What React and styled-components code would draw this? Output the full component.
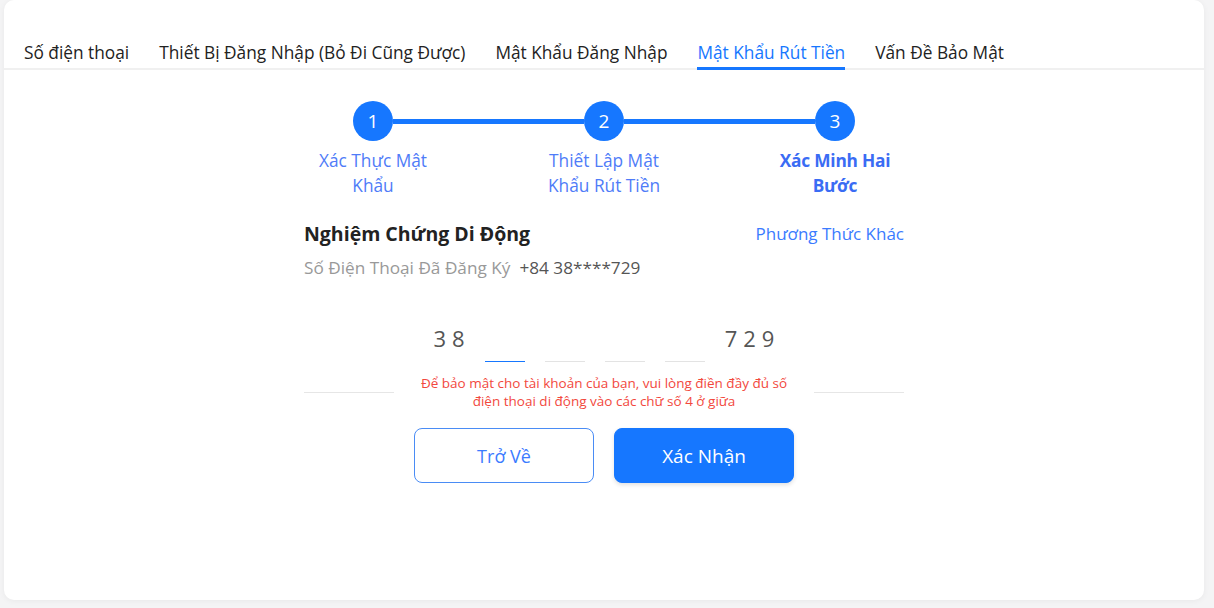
import React from 'react';
import styled, { createGlobalStyle } from 'styled-components';

const GlobalStyle = createGlobalStyle`
  body {
    margin: 0;
    background-color: #f4f4f5;
    font-family: 'Open Sans', 'Noto Sans', sans-serif;
    color: #222;
  }
`;

const Page = styled.div`
  padding: 0 10px 8px 4px;
`;

const Card = styled.div`
  height: 600px;
  background-color: #fff;
  border-radius: 10px;
  box-shadow: 0 1px 6px rgba(0, 0, 0, 0.05);
  display: flex;
  flex-direction: column;
`;

const TabBar = styled.div`
  display: flex;
  gap: 30px;
  padding: 41px 20px 0 20px;
  border-bottom: 2px solid #f0f0f0;
`;

const Tab = styled.div`
  font-size: 17.3px;
  line-height: 24px;
  padding: 0 0 2px 0;
  margin-bottom: -2px;
  color: ${({ active }) => (active ? '#1677ff' : '#222')};
  border-bottom: 3px solid ${({ active }) => (active ? '#1677ff' : 'transparent')};
  white-space: nowrap;
`;

const Steps = styled.div`
  display: flex;
  flex-direction: column;
  align-items: center;
  margin-top: 31px;
`;

const StepTrack = styled.div`
  display: flex;
  align-items: center;
`;

const StepCircle = styled.div`
  width: 40px;
  height: 40px;
  border-radius: 50%;
  background-color: #1677ff;
  color: #fff;
  font-size: 19px;
  display: flex;
  align-items: center;
  justify-content: center;
`;

const Connector = styled.div`
  width: 191px;
  height: 5px;
  background-color: #1677ff;
`;

const StepLabels = styled.div`
  display: grid;
  grid-template-columns: repeat(3, 231px);
  margin-top: 7px;
`;

const StepLabel = styled.div`
  justify-self: center;
  max-width: 125px;
  text-align: center;
  font-size: 17.3px;
  line-height: 25px;
  color: ${({ current }) => (current ? '#3a6cf4' : '#4f7cf8')};
  font-weight: ${({ current }) => (current ? 700 : 400)};
  letter-spacing: ${({ current }) => (current ? '-0.2px' : '0')};
`;

const Section = styled.div`
  width: 600px;
  margin: 23px auto 0 auto;
  display: flex;
  flex-direction: column;
`;

const TitleRow = styled.div`
  display: flex;
  justify-content: space-between;
  align-items: center;
`;

const Title = styled.div`
  font-size: 19.5px;
  font-weight: 700;
  line-height: 26px;
  color: #222;
`;

const LinkText = styled.div`
  font-size: 17px;
  line-height: 26px;
  color: #3b7bff;
`;

const PhoneInfo = styled.div`
  margin-top: 9px;
  font-size: 17.2px;
  line-height: 24px;
  color: #999;

  span {
    color: #555;
    margin-left: 9px;
  }
`;

const DigitRow = styled.div`
  display: flex;
  align-items: flex-end;
  justify-content: center;
  gap: 20px;
  margin-top: 43px;
`;

const Digits = styled.div`
  font-size: 22px;
  line-height: 30px;
  letter-spacing: 6px;
  margin-right: -6px;
  color: #555;
  margin-bottom: 10px;
`;

const Slot = styled.div`
  width: 40px;
  height: 1px;
  margin-bottom: 1px;
  background-color: ${({ focused }) => (focused ? '#1677ff' : '#e3e3e3')};
`;

const HintRow = styled.div`
  display: flex;
  align-items: center;
  margin-top: 11px;
`;

const HintLine = styled.div`
  flex: 1;
  height: 1px;
  background-color: #e6e6e6;
`;

const HintText = styled.div`
  width: 420px;
  padding: 0 14px;
  box-sizing: border-box;
  text-align: center;
  font-size: 13.5px;
  line-height: 18px;
  color: #f2483d;
`;

const ButtonRow = styled.div`
  display: flex;
  justify-content: center;
  gap: 20px;
  margin-top: 18px;
`;

const Button = styled.button`
  width: 180px;
  height: 55px;
  border-radius: 8px;
  font-family: inherit;
  font-size: ${({ primary }) => (primary ? '19px' : '18px')};
  border: 1px solid ${({ primary }) => (primary ? '#1677ff' : '#4a8cf5')};
  background-color: ${({ primary }) => (primary ? '#1677ff' : '#fff')};
  color: ${({ primary }) => (primary ? '#fff' : '#3b7bff')};
  box-shadow: ${({ primary }) => (primary ? '0 2px 4px rgba(0, 0, 0, 0.12)' : 'none')};
`;

const tabs = [
  'Số điện thoại',
  'Thiết Bị Đăng Nhập (Bỏ Đi Cũng Được)',
  'Mật Khẩu Đăng Nhập',
  'Mật Khẩu Rút Tiền',
  'Vấn Đề Bảo Mật',
];

const steps = ['Xác Thực Mật Khẩu', 'Thiết Lập Mật Khẩu Rút Tiền', 'Xác Minh Hai Bước'];

const App = () => {
  return (
    <Page>
      <GlobalStyle />
      <Card>
        <TabBar>
          {tabs.map((t, i) => (
            <Tab key={t} active={i === 3}>
              {t}
            </Tab>
          ))}
        </TabBar>

        <Steps>
          <StepTrack>
            <StepCircle>1</StepCircle>
            <Connector />
            <StepCircle>2</StepCircle>
            <Connector />
            <StepCircle>3</StepCircle>
          </StepTrack>
          <StepLabels>
            {steps.map((s, i) => (
              <StepLabel key={s} current={i === 2}>
                {s}
              </StepLabel>
            ))}
          </StepLabels>
        </Steps>

        <Section>
          <TitleRow>
            <Title>Nghiệm Chứng Di Động</Title>
            <LinkText>Phương Thức Khác</LinkText>
          </TitleRow>
          <PhoneInfo>
            Số Điện Thoại Đã Đăng Ký<span>+84 38****729</span>
          </PhoneInfo>

          <DigitRow>
            <Digits>38</Digits>
            <Slot focused />
            <Slot />
            <Slot />
            <Slot />
            <Digits>729</Digits>
          </DigitRow>

          <HintRow>
            <HintLine />
            <HintText>
              Để bảo mật cho tài khoản của bạn, vui lòng điền đầy đủ số điện thoại di động vào các
              chữ số 4 ở giữa
            </HintText>
            <HintLine />
          </HintRow>

          <ButtonRow>
            <Button>Trở Về</Button>
            <Button primary>Xác Nhận</Button>
          </ButtonRow>
        </Section>
      </Card>
    </Page>
  );
};

export default App;
